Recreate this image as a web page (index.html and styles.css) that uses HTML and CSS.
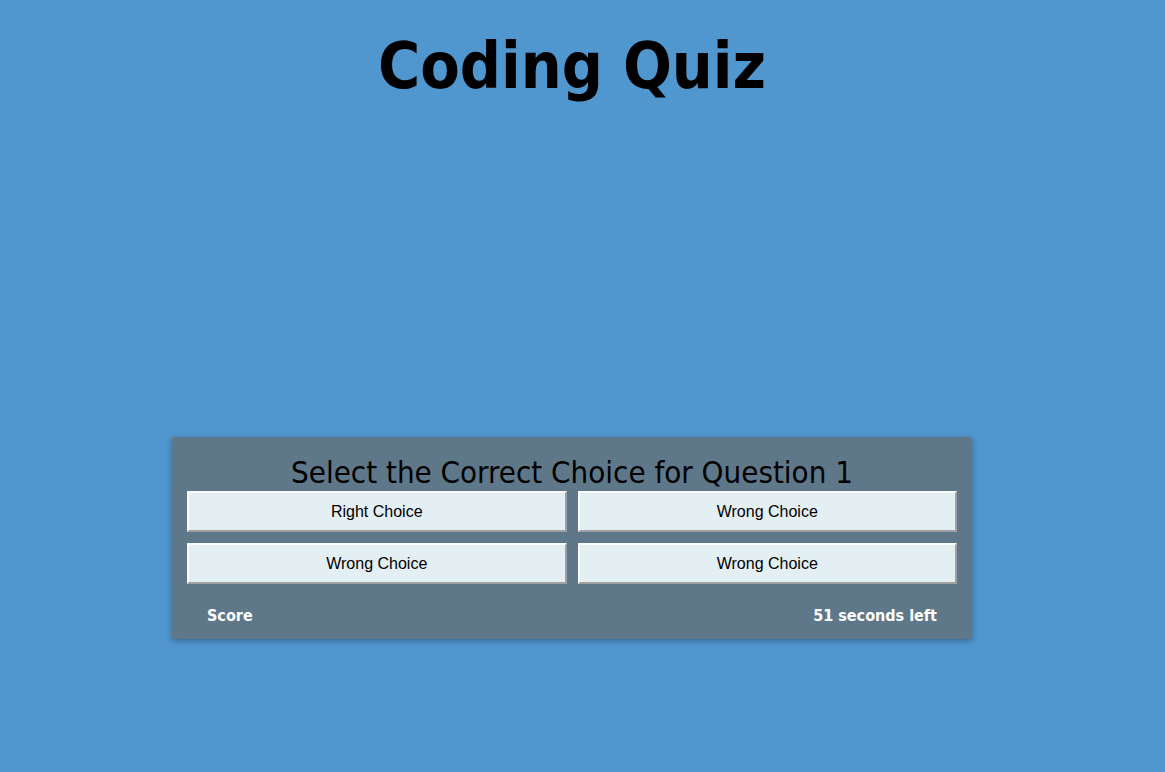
FILE: index.html
```html
<!DOCTYPE html>
<html>
<head>
<meta charset="utf-8">
<link rel="stylesheet" href="styles.css">
<title>Coding Quiz</title>
</head>
<body>
<header class="top">
  <h1 class="title">Coding Quiz</h1>
</header>
<main class="stage">
  <section class="card">
    <h2 class="question">Select the Correct Choice for Question 1</h2>
    <div class="choices">
      <button class="choice">Right Choice</button>
      <button class="choice">Wrong Choice</button>
      <button class="choice">Wrong Choice</button>
      <button class="choice">Wrong Choice</button>
    </div>
    <div class="footer">
      <span class="score">Score</span>
      <span class="timer">51 seconds left</span>
    </div>
  </section>
</main>
</body>
</html>
```

FILE: styles.css
```css
html, body {
  margin: 0;
  padding: 0;
}
body {
  background: #5096cf;
  font-family: "DejaVu Sans Condensed", "DejaVu Sans", sans-serif;
  height: 772px;
  overflow: hidden;
  padding-right: 21px;
}
.top {
  display: flex;
  justify-content: center;
}
.title {
  margin: 24px 0 0 0;
  font-size: 64px;
  font-weight: bold;
  line-height: 84px;
  color: #000;
}
.stage {
  display: flex;
  justify-content: center;
  padding-top: 329px;
}
.card {
  width: 800px;
  box-sizing: border-box;
  background: #5e7889;
  padding: 16px 15px 12px 15px;
  box-shadow: 0 2px 6px rgba(0, 0, 0, 0.3);
}
.question {
  margin: 0;
  text-align: center;
  font-weight: normal;
  font-size: 31px;
  line-height: 38px;
  color: #000;
}
.choices {
  display: grid;
  grid-template-columns: 1fr 1fr;
  gap: 11px;
}
.choice {
  height: 41px;
  background: #e4eff4;
  border: 2px solid;
  border-color: #fafafa #a0a0a0 #a0a0a0 #fafafa;
  font-family: "Liberation Sans", Arial, sans-serif;
  font-size: 16px;
  color: #000;
  padding: 0;
}
.footer {
  display: flex;
  justify-content: space-between;
  padding: 21px 20px 0 20px;
  color: #fff;
  font-weight: bold;
  font-size: 16px;
  line-height: 22px;
}
```
